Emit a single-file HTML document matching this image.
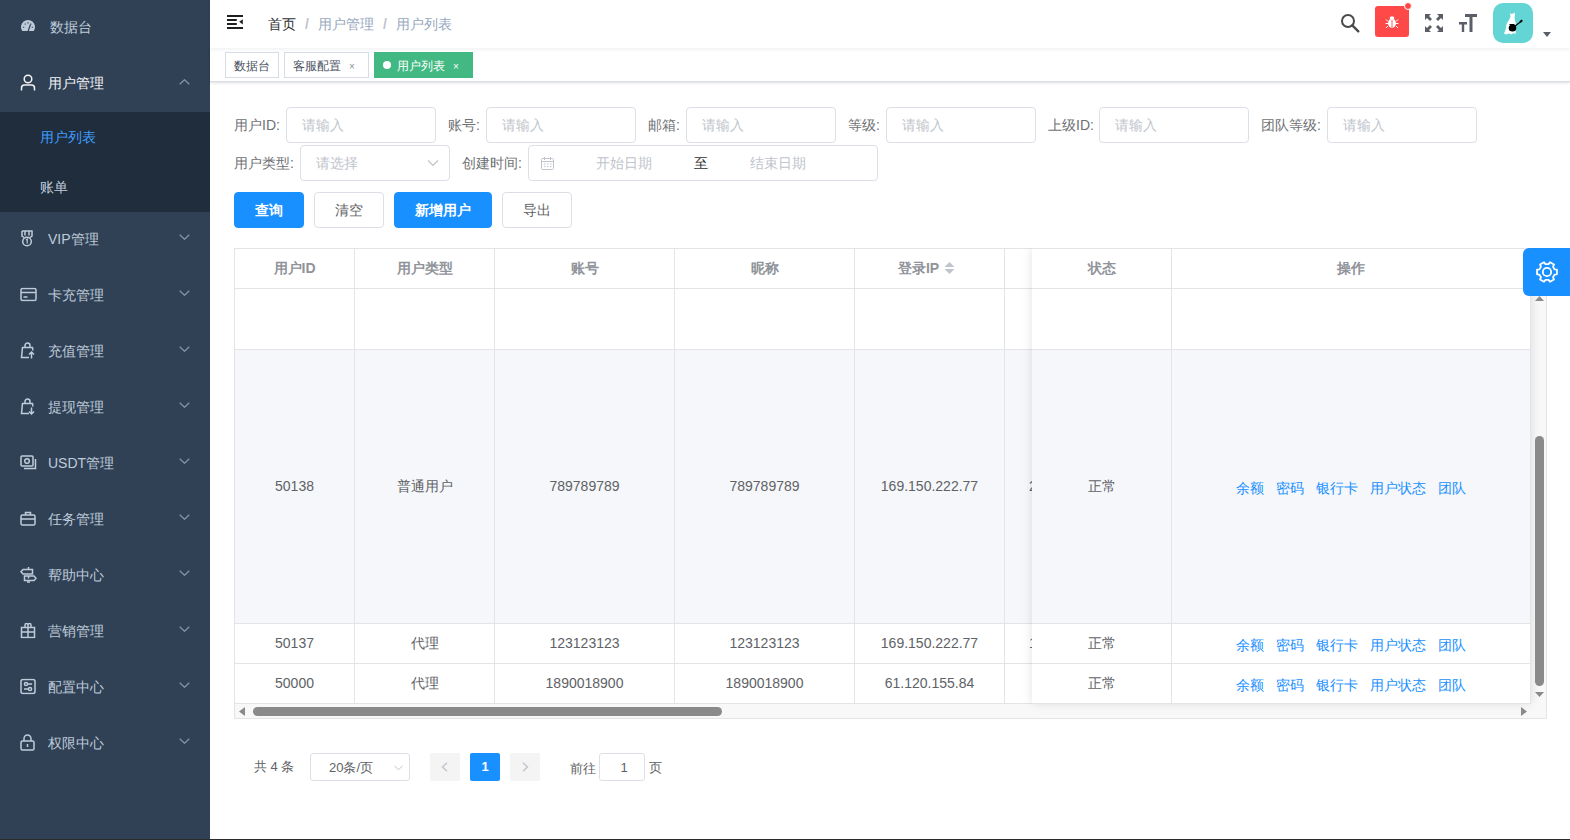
<!DOCTYPE html>
<html><head><meta charset="utf-8">
<style>
*{box-sizing:border-box;margin:0;padding:0}
html,body{width:1570px;height:840px;overflow:hidden;background:#fff;font-family:"Liberation Sans",sans-serif;font-size:14px;color:#606266}
.abs{position:absolute}
#side{position:absolute;left:0;top:0;width:210px;height:840px;background:#304156}
.mi{position:absolute;left:0;width:210px;height:56px;color:#bfcbd9;font-size:14px}
.mi .ic{position:absolute;left:20px;top:50%;transform:translateY(-50%)}
.mi .tx{position:absolute;left:48px;top:-1px;line-height:56px}
.mi .ar{position:absolute;left:179px;top:22px;line-height:0}
.mi .ar svg{display:block}
.sub{position:absolute;left:0;width:210px;height:50px;background:#1f2d3d;color:#bfcbd9}
.sub .tx{position:absolute;left:40px;line-height:50px}
#nav{position:absolute;left:210px;top:0;width:1360px;height:48px;background:#fff;box-shadow:0 1px 4px rgba(0,21,41,.08);z-index:2}
#tags{position:absolute;left:210px;top:48px;width:1360px;height:34px;background:#fff;border-bottom:1px solid #d8dce5;box-shadow:0 1px 3px 0 rgba(0,0,0,.12),0 0 3px 0 rgba(0,0,0,.04);z-index:1}
.tag{position:absolute;top:4px;height:26px;line-height:26px;border:1px solid #d8dce5;color:#495060;background:#fff;font-size:12px;padding:0 8px}
.lbl{position:absolute;color:#6e7074;font-size:14px;line-height:36px;height:36px}
.inp{position:absolute;height:36px;width:150px;border:1px solid #dcdfe6;border-radius:4px;color:#c0c4cc;line-height:34px;padding-left:15px;font-size:14px}
.btn{position:absolute;top:192px;height:36px;border-radius:4px;line-height:34px;text-align:center;font-size:14px;border:1px solid #dcdfe6;color:#606266;background:#fff}
.btn.p{background:#1890ff;border-color:#1890ff;color:#fff;font-weight:bold}
.hline{position:absolute;height:1px;background:#e3e4e6}
.vline{position:absolute;width:1px;background:#e3e4e6}
.th{position:absolute;top:248px;height:40px;line-height:40px;text-align:center;color:#909399;font-weight:bold;font-size:14px}
.td{position:absolute;text-align:center;color:#606266;font-size:14px}
.sp{display:inline-block;width:12px}
</style></head><body>
<div id="side">
<div class="mi" style="top:0"><span class="ic"><svg width="16" height="16" viewBox="0 0 16 16"><path d="M2.26 12.5 A7 7 0 1 1 13.74 12.5 Z" fill="#bfcbd9"/><g stroke="#304156" stroke-width="1.2"><path d="M8 13 L10.5 6"/><path d="M3.2 8.5l1 .5M4.8 5.2l.7.8M8 3.8v1.2M11.2 5.2l-.7.8M12.8 8.5l-1 .5"/></g></svg></span><span class="tx" style="left:50px">数据台</span></div>
<div class="mi" style="top:56px;color:#f4f4f5"><span class="ic"><svg width="16" height="17" viewBox="0 0 16 17"><circle cx="8" cy="5" r="3.8" stroke="#f4f4f5" fill="none" stroke-width="1.5"/><path d="M1.5 16.5v-2.5a3 3 0 0 1 3-3h7a3 3 0 0 1 3 3v2.5" stroke="#f4f4f5" fill="none" stroke-width="1.5"/></svg></span><span class="tx">用户管理</span><span class="ar" style="top:23px"><svg width="11" height="6" viewBox="0 0 11 6"><path d="M.7 5.3L5.5.7l4.8 4.6" stroke="#8593a8" stroke-width="1.2" fill="none"/></svg></span></div>
<div class="sub" style="top:112px;color:#409eff"><span class="tx">用户列表</span></div>
<div class="sub" style="top:162px"><span class="tx">账单</span></div>
<div class="mi" style="top:212px"><span class="ic"><svg width="14" height="17" viewBox="0 0 14 17"><path d="M2 1h10v5l-2 1.5M2 1v5l2 1.5M5 1v4.5M9 1v4.5" stroke="#bfcbd9" fill="none" stroke-width="1.5"/><circle cx="7" cy="11.5" r="4.3" stroke="#bfcbd9" fill="none" stroke-width="1.5"/><path d="M6 10l1.2-.8v4.3" stroke="#bfcbd9" fill="none" stroke-width="1.2"/></svg></span><span class="tx">VIP管理</span><span class="ar"><svg width="11" height="6" viewBox="0 0 11 6"><path d="M.7 .7L5.5 5.3l4.8-4.6" stroke="#8593a8" stroke-width="1.2" fill="none"/></svg></span></div>
<div class="mi" style="top:268px"><span class="ic"><svg width="17" height="14" viewBox="0 0 17 14"><rect x="1" y="1" width="15" height="12" rx="1.5" stroke="#bfcbd9" fill="none" stroke-width="1.5"/><path d="M1 5h15M3.5 9.5h4" stroke="#bfcbd9" fill="none" stroke-width="1.5"/></svg></span><span class="tx">卡充管理</span><span class="ar"><svg width="11" height="6" viewBox="0 0 11 6"><path d="M.7 .7L5.5 5.3l4.8-4.6" stroke="#8593a8" stroke-width="1.2" fill="none"/></svg></span></div>
<div class="mi" style="top:324px"><span class="ic"><svg width="15" height="17" viewBox="0 0 15 17"><path d="M9 15.5H1.5l1-10h10l.3 3M5 5.5V3.5a2.5 2.5 0 0 1 5 0v2" stroke="#bfcbd9" fill="none" stroke-width="1.5"/><path d="M11.5 16.5v-6M9 12.5l2.5-2.5 2.5 2.5" stroke="#bfcbd9" fill="none" stroke-width="1.5"/></svg></span><span class="tx">充值管理</span><span class="ar"><svg width="11" height="6" viewBox="0 0 11 6"><path d="M.7 .7L5.5 5.3l4.8-4.6" stroke="#8593a8" stroke-width="1.2" fill="none"/></svg></span></div>
<div class="mi" style="top:380px"><span class="ic"><svg width="15" height="17" viewBox="0 0 15 17"><path d="M9 15.5H1.5l1-10h10l.3 3M5 5.5V3.5a2.5 2.5 0 0 1 5 0v2" stroke="#bfcbd9" fill="none" stroke-width="1.5"/><path d="M11.5 9.5v6.5M9 13.5l2.5 2.5 2.5-2.5" stroke="#bfcbd9" fill="none" stroke-width="1.5"/></svg></span><span class="tx">提现管理</span><span class="ar"><svg width="11" height="6" viewBox="0 0 11 6"><path d="M.7 .7L5.5 5.3l4.8-4.6" stroke="#8593a8" stroke-width="1.2" fill="none"/></svg></span></div>
<div class="mi" style="top:436px"><span class="ic"><svg width="17" height="15" viewBox="0 0 17 15"><rect x="1" y="1" width="12" height="10" rx="1" stroke="#bfcbd9" fill="none" stroke-width="1.5"/><path d="M4 13.5h11.5V4" stroke="#bfcbd9" fill="none" stroke-width="1.5"/><circle cx="7" cy="6" r="2.3" stroke="#bfcbd9" fill="none" stroke-width="1.5"/></svg></span><span class="tx">USDT管理</span><span class="ar"><svg width="11" height="6" viewBox="0 0 11 6"><path d="M.7 .7L5.5 5.3l4.8-4.6" stroke="#8593a8" stroke-width="1.2" fill="none"/></svg></span></div>
<div class="mi" style="top:492px"><span class="ic"><svg width="16" height="15" viewBox="0 0 16 15"><rect x="1" y="4" width="14" height="10" rx="1.5" stroke="#bfcbd9" fill="none" stroke-width="1.5"/><path d="M5.5 4V1.5h5V4M1 8h14" stroke="#bfcbd9" fill="none" stroke-width="1.5"/></svg></span><span class="tx">任务管理</span><span class="ar"><svg width="11" height="6" viewBox="0 0 11 6"><path d="M.7 .7L5.5 5.3l4.8-4.6" stroke="#8593a8" stroke-width="1.2" fill="none"/></svg></span></div>
<div class="mi" style="top:548px"><span class="ic"><svg width="17" height="17" viewBox="0 0 17 17"><path d="M8.5 1v2M8.5 10v2.5M7 16h3" stroke="#bfcbd9" stroke-width="1.5" fill="none"/><path d="M3 3.5h9.5v4.5H3L1 5.75z" stroke="#bfcbd9" fill="none" stroke-width="1.5"/><path d="M4.5 10h9.5l2 2.25-2 2.25H4.5z" stroke="#bfcbd9" fill="none" stroke-width="1.5"/></svg></span><span class="tx">帮助中心</span><span class="ar"><svg width="11" height="6" viewBox="0 0 11 6"><path d="M.7 .7L5.5 5.3l4.8-4.6" stroke="#8593a8" stroke-width="1.2" fill="none"/></svg></span></div>
<div class="mi" style="top:604px"><span class="ic"><svg width="16" height="16" viewBox="0 0 16 16"><rect x="1.5" y="5" width="13" height="10" stroke="#bfcbd9" fill="none" stroke-width="1.5"/><path d="M1.5 9.5h13M8 5v10M5 5V2.5a1.5 1.5 0 0 1 3 0V5M8 5V2.5a1.5 1.5 0 0 1 3 0V5" stroke="#bfcbd9" fill="none" stroke-width="1.5"/></svg></span><span class="tx">营销管理</span><span class="ar"><svg width="11" height="6" viewBox="0 0 11 6"><path d="M.7 .7L5.5 5.3l4.8-4.6" stroke="#8593a8" stroke-width="1.2" fill="none"/></svg></span></div>
<div class="mi" style="top:660px"><span class="ic"><svg width="16" height="16" viewBox="0 0 16 16"><rect x="1" y="1" width="14" height="14" rx="2" stroke="#bfcbd9" fill="none" stroke-width="1.5"/><circle cx="6" cy="5.5" r="1.6" stroke="#bfcbd9" fill="none" stroke-width="1.5"/><circle cx="10" cy="10.5" r="1.6" stroke="#bfcbd9" fill="none" stroke-width="1.5"/><path d="M7.6 5.5h4.5M4 10.5h4.4" stroke="#bfcbd9" fill="none" stroke-width="1.5"/></svg></span><span class="tx">配置中心</span><span class="ar"><svg width="11" height="6" viewBox="0 0 11 6"><path d="M.7 .7L5.5 5.3l4.8-4.6" stroke="#8593a8" stroke-width="1.2" fill="none"/></svg></span></div>
<div class="mi" style="top:716px"><span class="ic"><svg width="15" height="17" viewBox="0 0 15 17"><rect x="1" y="7" width="13" height="9" rx="1.5" stroke="#bfcbd9" fill="none" stroke-width="1.5"/><path d="M4 7V4.5a3.5 3.5 0 0 1 7 0V7M7.5 10v3" stroke="#bfcbd9" fill="none" stroke-width="1.5"/></svg></span><span class="tx">权限中心</span><span class="ar"><svg width="11" height="6" viewBox="0 0 11 6"><path d="M.7 .7L5.5 5.3l4.8-4.6" stroke="#8593a8" stroke-width="1.2" fill="none"/></svg></span></div>
</div>
<div id="nav">
<svg class="abs" style="left:17px;top:14px" width="16" height="16" viewBox="0 0 16 16"><path d="M0 2h16M0 6h9.8M0 10h9.8M0 14h16" stroke="#1f1f1f" stroke-width="1.8"/><path d="M15.8 5.2v5.2l-3.6-2.6z" fill="#1f1f1f"/></svg>
<div class="abs" style="left:58px;top:0;line-height:48px;font-size:14px;white-space:nowrap"><span style="color:#303133">首页</span><span style="color:#c0c4cc;font-weight:bold;margin:0 9px">/</span><span style="color:#97a8be">用户管理</span><span style="color:#c0c4cc;font-weight:bold;margin:0 9px">/</span><span style="color:#97a8be">用户列表</span></div>
<svg class="abs" style="left:1131px;top:14px" width="19" height="19" viewBox="0 0 19 19"><circle cx="7" cy="7" r="6" stroke="#4a4a4a" stroke-width="2" fill="none"/><path d="M11.3 11.3l6 6" stroke="#4a4a4a" stroke-width="2.4" stroke-linecap="round"/></svg>
<div class="abs" style="left:1165px;top:6px;width:34px;height:31px;background:#ff4949;border-radius:3px"></div>
<svg class="abs" style="left:1175px;top:15px" width="14" height="14" viewBox="0 0 14 14"><g fill="#fff"><ellipse cx="7" cy="3" rx="2.3" ry="1.8"/><ellipse cx="7" cy="8.3" rx="4" ry="4.7"/></g><path d="M7 5v8" stroke="#ff4949" stroke-width="0.9"/><path d="M1 4.5l2 2M13 4.5l-2 2M0.5 8.5h2.5M13.5 8.5H11M1 13l2-2M13 13l-2-2" stroke="#fff" stroke-width="1"/></svg>
<div class="abs" style="left:1194px;top:2px;width:8px;height:8px;border-radius:4px;background:#ff4949;border:1px solid #fff"></div>
<svg class="abs" style="left:1215px;top:14px" width="18" height="18" viewBox="0 0 18 18"><g fill="#5a5e66"><path d="M0 0h6l-2 2 3 3-2 2-3-3-2 2z"/><path d="M18 0v6l-2-2-3 3-2-2 3-3-2-2z"/><path d="M0 18v-6l2 2 3-3 2 2-3 3 2 2z"/><path d="M18 18h-6l2-2-3-3 2-2 3 3 2-2z"/></g></svg>
<svg class="abs" style="left:1249px;top:14px" width="18" height="18" viewBox="0 0 18 18"><g fill="#5a5e66"><path d="M6 0h12v3h-4.5v15h-3V3H6z"/><path d="M0 8h8v2.4H5.2V18H2.8v-7.6H0z"/></g></svg>
<div class="abs" style="left:1283px;top:3px;width:40px;height:40px;border-radius:10px;background:#62d5d4;overflow:hidden">
<svg width="40" height="40" viewBox="0 0 40 40"><path d="M17 9.5L18 11L20.5 10.5L21.5 9L22 12L21.5 15L22.5 19L23 24L22.5 31L20 30L19 31.5L16 30.5L13 31.5L11 30.5L12.5 27L13.5 21L16 17L17.5 14Z" fill="#fff"/><ellipse cx="19.5" cy="25" rx="3.8" ry="3.6" fill="#000"/><path d="M16.5 21.5h5" stroke="#000" stroke-width="1"/><path d="M21.5 23.5L28 18.5" stroke="#000" stroke-width="1.1"/><path d="M27 19l2.3-1.8" stroke="#000" stroke-width="2"/></svg></div>
<svg class="abs" style="left:1333px;top:32px" width="8" height="5" viewBox="0 0 8 5"><path d="M0 0h8L4 5z" fill="#5a5e66"/></svg>
</div>
<div id="tags">
<div class="tag" style="left:15px;width:54px">数据台</div>
<div class="tag" style="left:74px;width:85px">客服配置<span style="position:absolute;left:64px;top:2px;line-height:24px;font-size:10px;color:#8c9099">×</span></div>
<div class="tag" style="left:164px;width:99px;background:#42b983;border-color:#42b983;color:#fff"><span style="position:absolute;left:8px;top:8px;width:8px;height:8px;border-radius:4px;background:#fff"></span><span style="position:absolute;left:22px;top:1px;line-height:24px">用户列表</span><span style="position:absolute;left:78px;top:2px;line-height:24px;font-size:10px">×</span></div>
</div>
<div id="main">
<div class="lbl" style="left:234px;top:107px">用户ID:</div><div class="inp" style="left:286px;top:107px">请输入</div>
<div class="lbl" style="left:448px;top:107px">账号:</div><div class="inp" style="left:486px;top:107px">请输入</div>
<div class="lbl" style="left:648px;top:107px">邮箱:</div><div class="inp" style="left:686px;top:107px">请输入</div>
<div class="lbl" style="left:848px;top:107px">等级:</div><div class="inp" style="left:886px;top:107px">请输入</div>
<div class="lbl" style="left:1048px;top:107px">上级ID:</div><div class="inp" style="left:1099px;top:107px">请输入</div>
<div class="lbl" style="left:1261px;top:107px">团队等级:</div><div class="inp" style="left:1327px;top:107px">请输入</div>
<div class="lbl" style="left:234px;top:145px">用户类型:</div><div class="inp" style="left:300px;top:145px">请选择<svg class="abs" style="left:126px;top:13px" width="12" height="8" viewBox="0 0 12 8"><path d="M1 1.5l5 5 5-5" stroke="#c0c4cc" stroke-width="1.2" fill="none"/></svg></div>
<div class="lbl" style="left:462px;top:145px">创建时间:</div>
<div class="inp" style="left:528px;top:145px;width:350px;padding:0">
<svg class="abs" style="left:12px;top:11px" width="13" height="13" viewBox="0 0 13 13"><rect x="0.5" y="1.5" width="12" height="11" rx="1" stroke="#c0c4cc" fill="none"/><path d="M0.5 4.5h12M3.5 0v3M9.5 0v3" stroke="#c0c4cc"/><path d="M3 7h1.5M6 7h1.5M9 7h1.5M3 9.5h1.5M6 9.5h1.5M9 9.5h1.5" stroke="#c0c4cc"/></svg>
<span class="abs" style="left:67px;top:0">开始日期</span><span class="abs" style="left:165px;top:0;color:#303133">至</span><span class="abs" style="left:221px;top:0">结束日期</span></div>
<div class="btn p" style="left:234px;width:70px">查询</div>
<div class="btn" style="left:314px;width:70px">清空</div>
<div class="btn p" style="left:394px;width:98px">新增用户</div>
<div class="btn" style="left:502px;width:70px">导出</div>
<div class="abs" style="left:0;top:0;width:1570px;height:840px;clip-path:inset(248px 23px 121px 234px)">
<div class="abs" style="left:234px;top:248px;width:1313px;height:471px;border:1px solid #e3e4e6;background:#fff"></div>
<div class="abs" style="left:235px;top:350px;width:1296px;height:273px;background:#f5f7fa"></div>
<div class="hline" style="left:235px;top:288px;width:1296px"></div>
<div class="hline" style="left:235px;top:349px;width:1296px"></div>
<div class="hline" style="left:235px;top:623px;width:1296px"></div>
<div class="hline" style="left:235px;top:663px;width:1296px"></div>
<div class="hline" style="left:235px;top:703px;width:1296px"></div>
<div class="vline" style="left:354px;top:249px;height:455px"></div>
<div class="vline" style="left:494px;top:249px;height:455px"></div>
<div class="vline" style="left:674px;top:249px;height:455px"></div>
<div class="vline" style="left:854px;top:249px;height:455px"></div>
<div class="vline" style="left:1004px;top:249px;height:455px"></div>
<div class="th" style="left:235px;width:119px">用户ID</div>
<div class="th" style="left:355px;width:139px">用户类型</div>
<div class="th" style="left:495px;width:179px">账号</div>
<div class="th" style="left:675px;width:179px">昵称</div>
<div class="th" style="left:852px;width:149px">登录IP<svg style="margin-left:5px;vertical-align:-1px" width="11" height="12" viewBox="0 0 11 12"><path d="M0.5 5L5.5 0l5 5z" fill="#c0c4cc"/><path d="M0.5 7h10l-5 5z" fill="#c0c4cc"/></svg></div>
<div class="td" style="left:235px;top:350px;width:119px;height:273px;line-height:273px">50138</div>
<div class="td" style="left:355px;top:350px;width:139px;height:273px;line-height:273px">普通用户</div>
<div class="td" style="left:495px;top:350px;width:179px;height:273px;line-height:273px">789789789</div>
<div class="td" style="left:675px;top:350px;width:179px;height:273px;line-height:273px">789789789</div>
<div class="td" style="left:855px;top:350px;width:149px;height:273px;line-height:273px">169.150.222.77</div>
<div class="td" style="left:1029px;top:350px;width:20px;height:273px;line-height:273px;text-align:left">2</div>
<div class="td" style="left:235px;top:624px;width:119px;height:39px;line-height:39px">50137</div>
<div class="td" style="left:355px;top:624px;width:139px;height:39px;line-height:39px">代理</div>
<div class="td" style="left:495px;top:624px;width:179px;height:39px;line-height:39px">123123123</div>
<div class="td" style="left:675px;top:624px;width:179px;height:39px;line-height:39px">123123123</div>
<div class="td" style="left:855px;top:624px;width:149px;height:39px;line-height:39px">169.150.222.77</div>
<div class="td" style="left:1029px;top:624px;width:20px;height:39px;line-height:39px;text-align:left">1</div>
<div class="td" style="left:235px;top:664px;width:119px;height:39px;line-height:39px">50000</div>
<div class="td" style="left:355px;top:664px;width:139px;height:39px;line-height:39px">代理</div>
<div class="td" style="left:495px;top:664px;width:179px;height:39px;line-height:39px">1890018900</div>
<div class="td" style="left:675px;top:664px;width:179px;height:39px;line-height:39px">1890018900</div>
<div class="td" style="left:855px;top:664px;width:149px;height:39px;line-height:39px">61.120.155.84</div>
<div class="abs" style="left:1531px;top:289px;width:15px;height:415px;background:#f8f8f8"></div>
<div class="abs" style="left:235px;top:704px;width:1311px;height:14px;background:#f8f8f8"></div>
<div class="abs" style="left:1032px;top:248px;width:499px;height:455px;background:#fff;box-shadow:0 0 10px rgba(0,0,0,.12)"></div>
<div class="abs" style="left:1032px;top:350px;width:499px;height:273px;background:#f5f7fa"></div>
<div class="abs" style="left:1032px;top:248px;width:499px;height:1px;background:#e3e4e6"></div>
<div class="hline" style="left:1032px;top:288px;width:499px"></div>
<div class="hline" style="left:1032px;top:349px;width:499px"></div>
<div class="hline" style="left:1032px;top:623px;width:499px"></div>
<div class="hline" style="left:1032px;top:663px;width:499px"></div>
<div class="hline" style="left:1032px;top:703px;width:499px"></div>
<div class="vline" style="left:1171px;top:249px;height:455px"></div>
<div class="vline" style="left:1530px;top:249px;height:455px"></div>
<div class="th" style="left:1032px;width:139px">状态</div>
<div class="th" style="left:1172px;width:358px">操作</div>
<div class="td" style="left:1032px;top:350px;width:139px;height:273px;line-height:273px">正常</div>
<div class="td" style="left:1172px;top:350px;width:358px;height:273px;line-height:270px;padding-top:3px"><span style="color:#1890ff">余额</span><span class="sp"></span><span style="color:#1890ff">密码</span><span class="sp"></span><span style="color:#1890ff">银行卡</span><span class="sp"></span><span style="color:#1890ff">用户状态</span><span class="sp"></span><span style="color:#1890ff">团队</span></div>
<div class="td" style="left:1032px;top:624px;width:139px;height:39px;line-height:39px">正常</div>
<div class="td" style="left:1172px;top:624px;width:358px;height:39px;line-height:36px;padding-top:3px"><span style="color:#1890ff">余额</span><span class="sp"></span><span style="color:#1890ff">密码</span><span class="sp"></span><span style="color:#1890ff">银行卡</span><span class="sp"></span><span style="color:#1890ff">用户状态</span><span class="sp"></span><span style="color:#1890ff">团队</span></div>
<div class="td" style="left:1032px;top:664px;width:139px;height:39px;line-height:39px">正常</div>
<div class="td" style="left:1172px;top:664px;width:358px;height:39px;line-height:36px;padding-top:3px"><span style="color:#1890ff">余额</span><span class="sp"></span><span style="color:#1890ff">密码</span><span class="sp"></span><span style="color:#1890ff">银行卡</span><span class="sp"></span><span style="color:#1890ff">用户状态</span><span class="sp"></span><span style="color:#1890ff">团队</span></div>
<svg class="abs" style="left:1535px;top:296px" width="9" height="5" viewBox="0 0 9 5"><path d="M0 5L4.5 0 9 5z" fill="#8a8a8a"/></svg>
<svg class="abs" style="left:1535px;top:692px" width="9" height="5" viewBox="0 0 9 5"><path d="M0 0h9L4.5 5z" fill="#8a8a8a"/></svg>
<div class="abs" style="left:1535px;top:436px;width:9px;height:250px;border-radius:4.5px;background:#8a8a8a"></div>
<svg class="abs" style="left:239px;top:707px" width="6" height="9" viewBox="0 0 6 9"><path d="M6 0v9L0 4.5z" fill="#8a8a8a"/></svg>
<svg class="abs" style="left:1521px;top:707px" width="6" height="9" viewBox="0 0 6 9"><path d="M0 0v9l6-4.5z" fill="#8a8a8a"/></svg>
<div class="abs" style="left:253px;top:707px;width:469px;height:9px;border-radius:4.5px;background:#8a8a8a"></div>
</div>
<div class="abs" style="left:1523px;top:248px;width:47px;height:48px;background:#1890ff;border-radius:6px 0 0 6px"></div>
<svg class="abs" style="left:1536px;top:261px" width="22" height="22" viewBox="0 0 22 22"><path d="M18.56 13.60 L20.94 13.29 L20.94 8.71 L18.56 8.40 L17.04 5.75 L17.96 3.54 L13.98 1.25 L12.53 3.15 L9.47 3.15 L8.02 1.25 L4.04 3.54 L4.96 5.75 L3.44 8.40 L1.06 8.71 L1.06 13.29 L3.44 13.60 L4.96 16.25 L4.04 18.46 L8.02 20.75 L9.47 18.85 L12.53 18.85 L13.98 20.75 L17.96 18.46 L17.04 16.25Z" stroke="#fff" stroke-width="1.8" fill="none" stroke-linejoin="round"/><circle cx="11" cy="11" r="4.2" stroke="#fff" stroke-width="1.8" fill="none"/></svg>
<div class="abs" style="left:254px;top:753px;line-height:28px;font-size:13px;color:#606266;white-space:nowrap">共 4 条</div>
<div class="abs" style="left:310px;top:753px;width:100px;height:28px;border:1px solid #dcdfe6;border-radius:3px;font-size:13px;line-height:27px;color:#606266;padding-left:18px">20条/页<svg class="abs" style="left:83px;top:11px" width="9" height="6" viewBox="0 0 9 6"><path d="M.5 .8l4 4 4-4" stroke="#c0c4cc" stroke-width="1" fill="none"/></svg></div>
<div class="abs" style="left:430px;top:753px;width:30px;height:28px;background:#f4f4f5;border-radius:2px"><svg class="abs" style="left:11px;top:9px" width="7" height="10" viewBox="0 0 7 10"><path d="M6 .8L1.5 5 6 9.2" stroke="#c0c4cc" stroke-width="1.4" fill="none"/></svg></div>
<div class="abs" style="left:470px;top:753px;width:30px;height:28px;background:#1890ff;border-radius:2px;color:#fff;font-weight:bold;font-size:13px;line-height:28px;text-align:center">1</div>
<div class="abs" style="left:510px;top:753px;width:30px;height:28px;background:#f4f4f5;border-radius:2px"><svg class="abs" style="left:12px;top:9px" width="7" height="10" viewBox="0 0 7 10"><path d="M1 .8L5.5 5 1 9.2" stroke="#c0c4cc" stroke-width="1.4" fill="none"/></svg></div>
<div class="abs" style="left:570px;top:755px;line-height:28px;font-size:13px;color:#606266;white-space:nowrap">前往</div>
<div class="abs" style="left:599px;top:753px;width:46px;height:28px;border:1px solid #dcdfe6;border-radius:3px;font-size:13px;line-height:28px;color:#606266;text-align:center;padding-left:4px">1</div>
<div class="abs" style="left:649px;top:754px;line-height:28px;font-size:13px;color:#606266">页</div>
</div>
<div class="abs" style="left:0;top:839px;width:1570px;height:1px;background:#2b2b2b"></div>
</body></html>
